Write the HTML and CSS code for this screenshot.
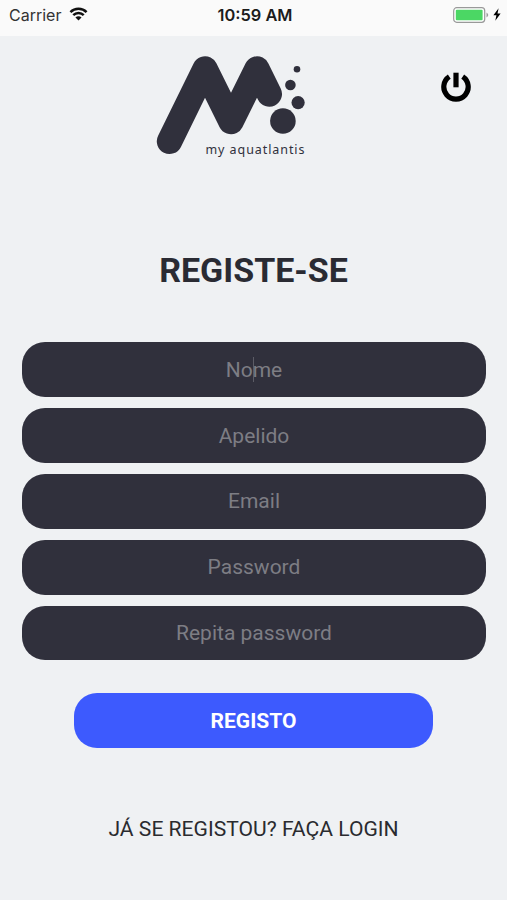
FILE: index.html
```html
<!DOCTYPE html>
<html lang="pt">
<head>
  <meta charset="UTF-8" />
  <meta name="viewport" content="width=device-width, initial-scale=1.0" />
  <title>my aquatlantis</title>
  <link rel="stylesheet" href="styles.css">
</head>
<body>
  <!-- Status bar -->
  <div class="status-bar">
    <div class="carrier">
      <span>Carrier</span>
      <svg class="wifi" viewBox="0 0 20 14">
        <path d="M1.5 5 A12 12 0 0 1 18.5 5" />
        <path d="M4.5 8.2 A7.8 7.8 0 0 1 15.5 8.2" />
        <path class="wifi-dot" d="M10 13.8 L6.8 10.6 A4.5 4.5 0 0 1 13.2 10.6 Z" />
      </svg>
    </div>
    <div class="time">10:59 AM</div>
    <div class="power-status">
      <svg class="battery" viewBox="0 0 36 16">
        <rect x="0.7" y="0.7" width="31" height="14.6" rx="3" fill="#fff" stroke="#999" stroke-width="1.2" />
        <rect x="2.8" y="2.8" width="26.8" height="10.4" rx="1" fill="#4bd764" />
        <path d="M33.5 5.5 Q37 8 33.5 10.5 Z" fill="#999" />
      </svg>
      <svg class="bolt" viewBox="0 0 8 13">
        <path d="M5.6 0.3 L0.4 7.2 H3.4 L2.3 12.7 L7.6 5.4 H4.5 Z" />
      </svg>
    </div>
  </div>

  <header class="header">
    <svg class="logo" viewBox="155 54 152 104">
      <path class="logo-m" d="M169.5 141.3 L205 69 L231 121.5 L257 69 L269.3 94" />
      <circle cx="297" cy="69.2" r="3.3" />
      <circle cx="290.4" cy="85" r="5.3" />
      <circle cx="298.1" cy="102.6" r="6.6" />
      <circle cx="282.9" cy="121" r="12.8" />
      <text x="205.5" y="154" textLength="99">my aquatlantis</text>
    </svg>
    <button class="power-button" aria-label="Sair">
      <svg viewBox="0 0 30 30">
        <path d="M8.3 4.7 A12.2 12.2 0 1 0 21.7 4.7" />
        <path d="M15 0.7 V15.3" />
      </svg>
    </button>
  </header>

  <main class="register">
    <h1>REGISTE-SE</h1>
    <form class="form">
      <div class="field active"><input type="text" placeholder="Nome"></div>
      <div class="field"><input type="text" placeholder="Apelido"></div>
      <div class="field"><input type="email" placeholder="Email"></div>
      <div class="field"><input type="password" placeholder="Password"></div>
      <div class="field"><input type="password" placeholder="Repita password"></div>
      <button class="submit" type="button">REGISTO</button>
    </form>
    <a class="login-link" href="#">JÁ SE REGISTOU? FAÇA LOGIN</a>
  </main>
</body>
</html>
```

FILE: styles.css
```css
* {
  margin: 0;
  padding: 0;
  box-sizing: border-box;
}
body {
  font-family: Roboto, sans-serif;
  background-color: #eff1f3;
  color: #2a2b33;
  height: 100vh;
  overflow: hidden;
}
svg {
  display: block;
}
/* Status bar */
.status-bar {
  display: grid;
  grid-template-columns: 1fr auto 1fr;
  align-items: center;
  height: 36px;
  padding: 0 6px 6px 9px;
  background-color: #fafafa;
  font-family: Inter, sans-serif;
  font-size: 16px;
  color: #333;
}
.carrier {
  display: flex;
  align-items: center;
  gap: 8px;
}
.wifi {
  width: 19px;
  height: 14px;
  margin-top: -2px;
  fill: none;
  stroke: #111;
  stroke-width: 2.6;
}
.wifi .wifi-dot {
  fill: #111;
  stroke: none;
}
.time {
  font-size: 16.4px;
  font-weight: 600;
  color: #1c1c1c;
}
.power-status {
  display: flex;
  align-items: center;
  justify-content: flex-end;
  gap: 4px;
  margin-top: -1px;
}
.battery {
  width: 36px;
  height: 16px;
}
.bolt {
  width: 8px;
  height: 13px;
}
/* Logo and power button */
.header {
  display: flex;
  justify-content: space-between;
  align-items: flex-start;
  height: 214px;
  padding: 18px 36px 0 155px;
}
.logo {
  width: 152px;
  height: 104px;
  fill: #30303c;
}
.logo-m {
  fill: none;
  stroke: #30303c;
  stroke-width: 25.4;
  stroke-linecap: round;
  stroke-linejoin: round;
}
.logo text {
  font-family: "Noto Sans", sans-serif;
  font-size: 12.5px;
}
.power-button {
  margin-top: 18px;
  border: none;
  background: none;
}
.power-button svg {
  width: 30px;
  height: 30px;
  fill: none;
  stroke: #000;
  stroke-width: 5.2;
}
/* Register form */
.register {
  display: flex;
  flex-direction: column;
  align-items: center;
}
h1 {
  font-size: 34px;
  line-height: 40px;
  font-weight: 700;
}
.form {
  display: flex;
  flex-direction: column;
  align-items: center;
  gap: 11px;
  width: 100%;
  margin-top: 52.4px;
  padding: 0 21px 0 22px;
}
.field {
  position: relative;
  width: 100%;
  height: 54.8px;
}
.field input {
  width: 100%;
  height: 100%;
  border: none;
  border-radius: 23px;
  background-color: #30303c;
  color: #fff;
  font-family: inherit;
  font-size: 21px;
  text-align: center;
}
.field input::placeholder {
  color: #7d7d84;
}
/* Text cursor of the focused field */
.field.active::after {
  content: "";
  position: absolute;
  top: 15px;
  left: 50%;
  width: 1px;
  height: 25px;
  margin-left: -1px;
  background-color: #5c5c66;
}
.submit {
  width: 359px;
  height: 55px;
  margin-top: 22px;
  margin-right: 1px;
  border: none;
  border-radius: 23px;
  background-color: #3d5afe;
  color: #fff;
  font-family: inherit;
  font-size: 21px;
  font-weight: 700;
}
.login-link {
  margin-top: 67px;
  font-size: 21.1px;
  line-height: 28px;
  color: #2a2b2f;
  text-decoration: none;
}
```
